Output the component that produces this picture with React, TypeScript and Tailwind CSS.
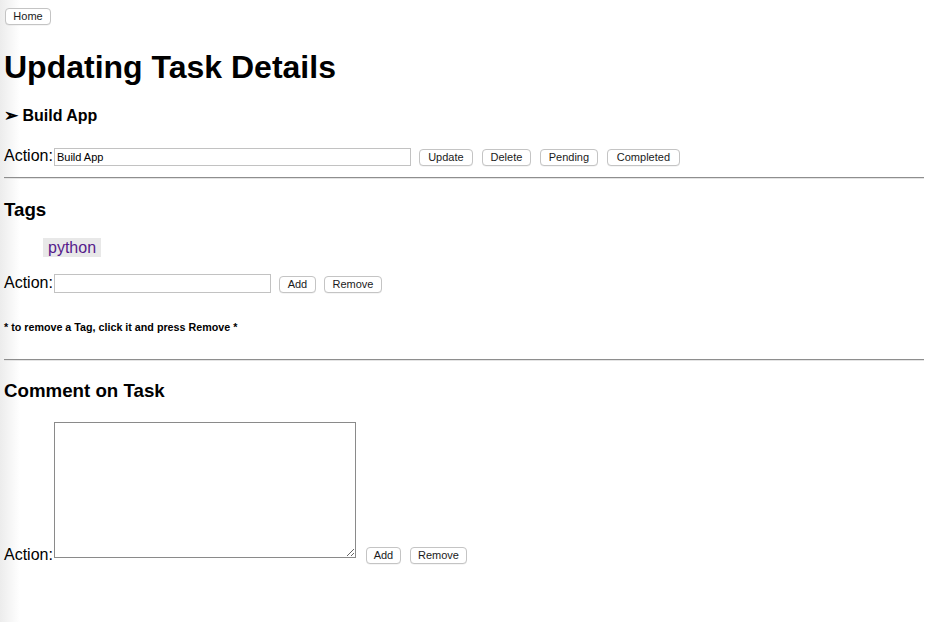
import { useState } from 'react';

const btn =
  'h-[17px] shrink-0 rounded-[4px] border border-[#c4c4c4] bg-white text-center text-[11px] leading-[15px] text-[#1a1a1a] shadow-[0_0.5px_0.5px_rgba(0,0,0,0.08)]';

function Divider() {
  return <hr className="my-[8px] h-[2px] border-0 border-t border-b border-t-[#8e8e8e] border-b-[#e4e4e4]" />;
}

export default function App() {
  const [task, setTask] = useState('Build App');
  const [tag, setTag] = useState('');
  const [comment, setComment] = useState('');

  return (
    <div className="min-h-[622px] bg-[linear-gradient(to_right,#ececec,#ffffff_20px)] pt-[8px] pl-[4px] pr-[8px] text-black font-['Liberation_Sans',Arial,sans-serif]">
      <div className="flex">
        <button className={`${btn} ml-[1px] w-[46px]`}>Home</button>
      </div>

      <h1 className="mt-[23.5px] mb-[19px] text-[32px] font-bold leading-[37px]">Updating Task Details</h1>

      <h4 className="mt-[21px] mb-[21.28px] text-[16px] font-bold leading-[18.4px]">
        <span className="text-[17px]">➢</span> Build App
      </h4>

      {/* Task actions */}
      <div className="flex h-[23px] items-baseline pt-[1px]">
        <span className="text-[16px] leading-[18px]">Action:</span>
        <input
          value={task}
          onChange={(e) => setTask(e.target.value)}
          className="ml-[1px] h-[18px] w-[357px] border border-[#c2c2c2] px-[2px] text-[11px] leading-[13px] outline-none"
        />
        <button className={`${btn} ml-[8px] w-[54px]`}>Update</button>
        <button className={`${btn} ml-[9px] w-[49px]`}>Delete</button>
        <button className={`${btn} ml-[9px] w-[58px]`}>Pending</button>
        <button className={`${btn} ml-[9px] w-[73px]`}>Completed</button>
      </div>

      <Divider />

      <h3 className="mt-[19.7px] mb-[17.7px] text-[18.72px] font-bold leading-[21.5px]">Tags</h3>

      <ul className="my-[16px] pl-[39px]">
        <li className="flex">
          <a href="#" className="block bg-[#e8e8e8] px-[5px] text-[16px] leading-[19px] text-[#551a8b]">
            python
          </a>
        </li>
      </ul>

      <div className="flex h-[23px] items-baseline pt-[0.6px]">
        <span className="text-[16px] leading-[18px]">Action:</span>
        <input
          value={tag}
          onChange={(e) => setTag(e.target.value)}
          className="ml-[1px] h-[19px] w-[217px] border border-[#c2c2c2] px-[2px] text-[11px] leading-[13px] outline-none"
        />
        <button className={`${btn} ml-[8px] w-[37px]`}>Add</button>
        <button className={`${btn} ml-[8px] w-[58px]`}>Remove</button>
      </div>

      <h6 className="mt-[25px] mb-[26px] text-[10.72px] font-bold leading-[12.3px]">
        * to remove a Tag, click it and press Remove *
      </h6>

      <Divider />

      <h3 className="my-[18.72px] text-[18.72px] font-bold leading-[21.5px]">Comment on Task</h3>

      {/* Comment */}
      <div className="flex items-end">
        <span className="text-[16px] leading-[18px]">Action:</span>
        <textarea
          value={comment}
          onChange={(e) => setComment(e.target.value)}
          className="mt-[2px] mb-[6px] ml-[1px] h-[136px] w-[302px] border border-[#8a8a8a] p-[2px] text-[11px] outline-none"
        />
        <button className={`${btn} ml-[10px] w-[35px]`}>Add</button>
        <button className={`${btn} ml-[9px] w-[57px]`}>Remove</button>
      </div>
    </div>
  );
}
